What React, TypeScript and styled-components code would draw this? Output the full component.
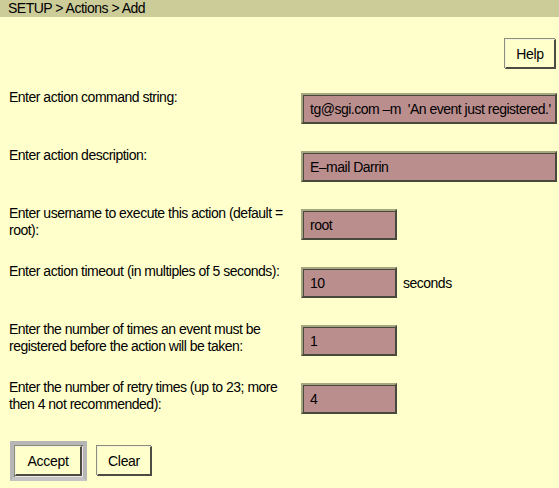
import React from "react";
import styled, { createGlobalStyle } from "styled-components";

const FONT = `"Liberation Sans", Arial, sans-serif`;

const Global = createGlobalStyle`
  html, body {
    margin: 0;
    padding: 0;
    background: #ffffcc;
  }
  body {
    font-family: ${FONT};
    font-size: 14px;
    letter-spacing: -0.5px;
    color: #000;
  }
`;

const Page = styled.div`
  width: 559px;
  min-height: 488px;
  background: #ffffcc;
`;

const Breadcrumb = styled.div`
  height: 17px;
  line-height: 17px;
  background: #cccc99;
  padding-left: 8px;
  white-space: nowrap;
`;

const HelpRow = styled.div`
  display: flex;
  justify-content: flex-end;
  padding: 22px 3px 0 0;
`;

const Button = styled.button<{ $w: number }>`
  box-sizing: border-box;
  width: ${(p) => p.$w}px;
  height: 30px;
  padding: 0;
  background: #ffffcc;
  font-family: ${FONT};
  font-size: 14px;
  letter-spacing: -0.3px;
  color: #000;
  border-style: solid;
  border-width: 1px 2px 2px 1px;
  border-color: #f4f4dc #4c4c44 #4c4c44 #f4f4dc;
  box-shadow: -1px -1px 0 #8e8e78;
  cursor: pointer;
`;

const Form = styled.div`
  display: grid;
  grid-template-columns: 283px 1fr;
  column-gap: 9px;
  row-gap: 23px;
  padding: 20px 0 0 9px;
`;

const Label = styled.div`
  line-height: 17px;
`;

const Field = styled.div`
  display: flex;
  align-items: center;
  gap: 6px;
  margin-top: 4px;
`;

const TextInput = styled.input<{ $w: number }>`
  box-sizing: border-box;
  width: ${(p) => p.$w}px;
  height: 31px;
  margin: 0;
  padding: 0 0 0 7px;
  background: #bb8e8e;
  font-family: ${FONT};
  font-size: 14px;
  letter-spacing: -0.5px;
  color: #000;
  border-style: solid;
  border-width: 2px;
  border-color: #a6a680 #48483c #48483c #a6a680;
  box-shadow: inset 1px 1px 0 #48483c;
  outline: none;
`;

const Actions = styled.div`
  display: flex;
  align-items: center;
  gap: 10px;
  padding: 27px 0 0 10px;
`;

const FocusFrame = styled.span`
  display: inline-flex;
  border-style: solid;
  border-width: 4px;
  border-color: #b6b6b6 #b6b6b6 #c4c4c4 #b6b6b6;
  box-shadow: inset 1px 1px 0 #6c6c6c, inset -1px -1px 0 #f0e6e6;
  & > button {
    margin: 1px;
  }
`;

type Row = { label: string; value: string; wide?: boolean; suffix?: string };

const rows: Row[] = [
  {
    label: "Enter action command string:",
    value: "tg@sgi.com –m  'An event just registered.'",
    wide: true,
  },
  { label: "Enter action description:", value: "E–mail Darrin", wide: true },
  {
    label: "Enter username to execute this action (default = root):",
    value: "root",
  },
  {
    label: "Enter action timeout (in multiples of 5 seconds):",
    value: "10",
    suffix: "seconds",
  },
  {
    label:
      "Enter the number of times an event must be registered before the action will be taken:",
    value: "1",
  },
  {
    label:
      "Enter the number of retry times (up to 23; more then 4 not recommended):",
    value: "4",
  },
];

export default function App() {
  return (
    <Page>
      <Global />
      <Breadcrumb>SETUP &gt; Actions &gt; Add</Breadcrumb>
      <HelpRow>
        <Button $w={51}>Help</Button>
      </HelpRow>
      <Form>
        {rows.map((r) => (
          <React.Fragment key={r.label}>
            <Label>{r.label}</Label>
            <Field>
              <TextInput $w={r.wide ? 256 : 96} defaultValue={r.value} />
              {r.suffix && <span>{r.suffix}</span>}
            </Field>
          </React.Fragment>
        ))}
      </Form>
      <Actions>
        <FocusFrame>
          <Button $w={67}>Accept</Button>
        </FocusFrame>
        <Button $w={55}>Clear</Button>
      </Actions>
    </Page>
  );
}
